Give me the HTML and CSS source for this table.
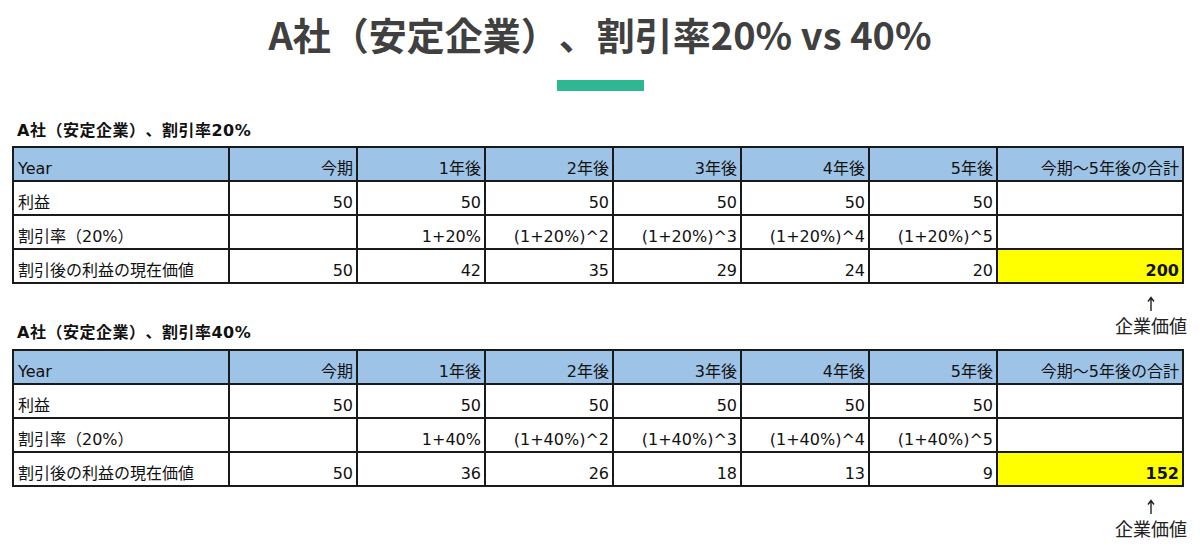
FILE: index.html
```html
<!DOCTYPE html>
<html lang="ja">
<head>
<meta charset="utf-8">
<title>A社（安定企業）、割引率20% vs 40%</title>
<link rel="stylesheet" href="styles.css">
</head>
<body>
<main class="page">
  <header class="head">
    <h1 class="title">A社（安定企業）、割引率20% vs 40%</h1>
    <div class="bar"></div>
  </header>

  <section class="block first">
    <h2 class="subtitle">A社（安定企業）、割引率20%</h2>
    <div class="table-wrap">
      <table class="grid">
        <colgroup>
          <col class="c-label"><col class="c-n"><col class="c-n"><col class="c-n"><col class="c-n"><col class="c-n"><col class="c-n"><col class="c-total">
        </colgroup>
        <tr class="hdr"><td class="l">Year</td><td>今期</td><td>1年後</td><td>2年後</td><td>3年後</td><td>4年後</td><td>5年後</td><td>今期～5年後の合計</td></tr>
        <tr><td class="l">利益</td><td>50</td><td>50</td><td>50</td><td>50</td><td>50</td><td>50</td><td></td></tr>
        <tr><td class="l">割引率（20%）</td><td></td><td>1+20%</td><td>(1+20%)^2</td><td>(1+20%)^3</td><td>(1+20%)^4</td><td>(1+20%)^5</td><td></td></tr>
        <tr><td class="l">割引後の利益の現在価値</td><td>50</td><td>42</td><td>35</td><td>29</td><td>24</td><td>20</td><td class="total">200</td></tr>
      </table>
      <div class="note">
        <svg class="arrow" width="10" height="16" viewBox="0 0 10 16"><path d="M5 15V2M2 5.5L5 1.5L8 5.5" fill="none" stroke="#222" stroke-width="1.4"/></svg>
        <span class="note-text">企業価値</span>
      </div>
    </div>
  </section>

  <section class="block second">
    <h2 class="subtitle">A社（安定企業）、割引率40%</h2>
    <div class="table-wrap">
      <table class="grid">
        <colgroup>
          <col class="c-label"><col class="c-n"><col class="c-n"><col class="c-n"><col class="c-n"><col class="c-n"><col class="c-n"><col class="c-total">
        </colgroup>
        <tr class="hdr"><td class="l">Year</td><td>今期</td><td>1年後</td><td>2年後</td><td>3年後</td><td>4年後</td><td>5年後</td><td>今期～5年後の合計</td></tr>
        <tr><td class="l">利益</td><td>50</td><td>50</td><td>50</td><td>50</td><td>50</td><td>50</td><td></td></tr>
        <tr><td class="l">割引率（20%）</td><td></td><td>1+40%</td><td>(1+40%)^2</td><td>(1+40%)^3</td><td>(1+40%)^4</td><td>(1+40%)^5</td><td></td></tr>
        <tr><td class="l">割引後の利益の現在価値</td><td>50</td><td>36</td><td>26</td><td>18</td><td>13</td><td>9</td><td class="total">152</td></tr>
      </table>
      <div class="note">
        <svg class="arrow" width="10" height="16" viewBox="0 0 10 16"><path d="M5 15V2M2 5.5L5 1.5L8 5.5" fill="none" stroke="#222" stroke-width="1.4"/></svg>
        <span class="note-text">企業価値</span>
      </div>
    </div>
  </section>
</main>
</body>
</html>
```

FILE: styles.css
```css
html, body {
  margin: 0;
  padding: 0;
  background: #ffffff;
}

.page {
  width: 1200px;
  height: 549px;
  overflow: hidden;
  font-family: "DejaVu Sans", "Noto Sans CJK JP", sans-serif;
  color: #111111;
  text-spacing-trim: space-all;
}

.head {
  display: flex;
  flex-direction: column;
  align-items: center;
  padding-top: 14px;
}

.title {
  margin: 0;
  font-family: "Noto Sans CJK JP", sans-serif;
  font-weight: 700;
  font-size: 38px;
  line-height: 39px;
  color: #404040;
  text-spacing-trim: space-all;
}

.bar {
  margin-top: 27px;
  width: 87px;
  height: 11px;
  background: #2db893;
}

.block {
  padding-left: 12px;
}

.block.first {
  margin-top: 30px;
}

.block.second {
  margin-top: 39px;
}

.subtitle {
  margin: 0 0 5px 5px;
  font-family: "DejaVu Sans", "Noto Sans CJK JP", sans-serif;
  font-weight: 700;
  font-size: 16px;
  line-height: 20px;
  letter-spacing: 0.5px;
  color: #111111;
}

.second .subtitle {
  margin-bottom: 6px;
}

.table-wrap {
  position: relative;
  width: 1170px;
}

.grid {
  width: 1170px;
  table-layout: fixed;
  border-collapse: collapse;
  border: 2px solid #1a1a1a;
}

.c-label { width: 216px; }
.c-n { width: 128px; }
.c-total { width: 186px; }

.grid td {
  height: 31px;
  padding: 0 3px 1px 4px;
  border: 2px solid #1a1a1a;
  font-size: 16px;
  line-height: 20px;
  text-align: right;
  vertical-align: bottom;
  white-space: nowrap;
  color: #111111;
}

.grid td.l {
  text-align: left;
}

.grid tr.hdr td {
  background: #9dc3e6;
}

.grid td.total {
  background: #ffff00;
  font-weight: 700;
}

.note {
  position: absolute;
  top: calc(100% + 12px);
  right: -9px;
  width: 80px;
  display: flex;
  flex-direction: column;
  align-items: center;
}

.arrow {
  display: block;
}

.note-text {
  margin-top: 2px;
  font-family: "Noto Sans CJK JP", sans-serif;
  font-size: 18px;
  line-height: 22px;
  color: #222222;
}
```
